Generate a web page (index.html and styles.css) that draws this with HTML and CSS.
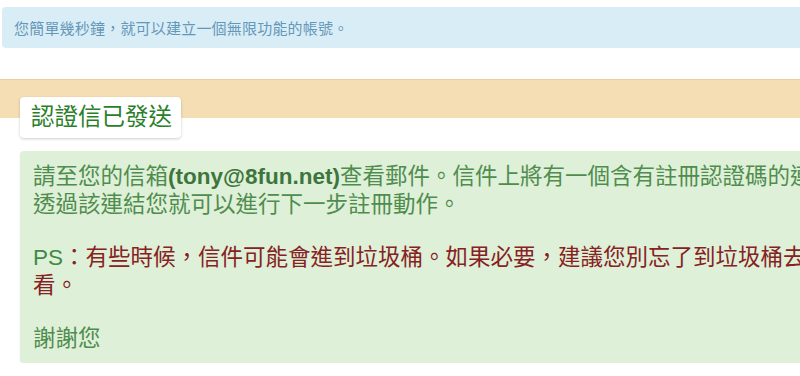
FILE: index.html
```html
<!DOCTYPE html>
<html lang="zh-Hant">
<head>
<meta charset="utf-8">
<title>認證信已發送</title>
<link rel="stylesheet" href="styles.css">
</head>
<body>
<div class="page">
  <div class="info">您簡單幾秒鐘，就可以建立一個無限功能的帳號。</div>
  <div class="band">
    <div class="title-box">認證信已發送</div>
  </div>
  <div class="msg">
    <p class="para">請至您的信箱<b class="email">(tony@8fun.net)</b>查看郵件。信件上將有一個含有註冊認證碼的連結，<br>透過該連結您就可以進行下一步註冊動作。</p>
    <p class="para"><span class="ps">PS</span><span class="warn">：有些時候，信件可能會進到垃圾桶。如果必要，建議您別忘了到垃圾桶去查<br>看。</span></p>
    <p class="para">謝謝您</p>
  </div>
</div>
</body>
</html>
```

FILE: styles.css
```css
html, body {
  margin: 0;
  padding: 0;
  overflow: hidden;
  background: #ffffff;
}

body {
  font-family: "Liberation Sans", "Noto Sans CJK TC", sans-serif;
}

.page {
  width: 1100px;
  padding-top: 7px;
}

.info {
  margin-left: 2px;
  height: 41px;
  box-sizing: border-box;
  padding: 0 12px;
  display: flex;
  align-items: center;
  background: #d9edf7;
  border-radius: 4px;
  color: #6597b8;
  font-size: 15px;
  letter-spacing: 0.2px;
}

.band {
  margin-top: 31px;
  height: 39px;
  border-top: 1px solid #e6cfa4;
  background: #f5deb3;
  padding-top: 17px;
  box-sizing: border-box;
}

.title-box {
  display: inline-block;
  margin-left: 20px;
  height: 41px;
  box-sizing: border-box;
  padding: 0 9px 0 11px;
  line-height: 41px;
  background: #ffffff;
  border-radius: 4px;
  box-shadow: 0 1px 3px rgba(0, 0, 0, 0.2);
  color: #2a7f2a;
  font-size: 23.5px;
  position: relative;
}

.msg {
  margin: 33px 0 0 20px;
  height: 212px;
  box-sizing: border-box;
  padding: 12px 13px 0;
  background: #dff0d8;
  border-radius: 4px;
  box-shadow: 0 1px 2px rgba(0, 0, 0, 0.08);
  color: #4f8d4f;
  font-size: 22.5px;
  line-height: 28px;
  white-space: nowrap;
}

.para {
  margin: 0 0 25px;
}

.email {
  color: #3c763d;
  font-weight: bold;
}

.ps {
  color: #3f8a48;
}

.warn {
  color: #862222;
}
```
